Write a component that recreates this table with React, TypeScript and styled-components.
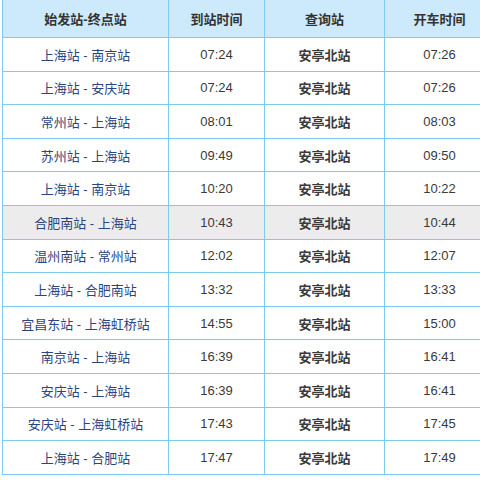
import React from 'react';
import styled, { createGlobalStyle } from 'styled-components';

const GlobalStyle = createGlobalStyle`
  html, body {
    margin: 0;
    padding: 0;
    background: #ffffff;
    overflow: hidden;
  }
  body {
    font-family: "Liberation Sans", "Noto Sans CJK SC", Arial, sans-serif;
  }
`;

type Train = {
  route: string;
  arrive: string;
  station: string;
  depart: string;
};

const trains: Train[] = [
  { route: '上海站 - 南京站', arrive: '07:24', station: '安亭北站', depart: '07:26' },
  { route: '上海站 - 安庆站', arrive: '07:24', station: '安亭北站', depart: '07:26' },
  { route: '常州站 - 上海站', arrive: '08:01', station: '安亭北站', depart: '08:03' },
  { route: '苏州站 - 上海站', arrive: '09:49', station: '安亭北站', depart: '09:50' },
  { route: '上海站 - 南京站', arrive: '10:20', station: '安亭北站', depart: '10:22' },
  { route: '合肥南站 - 上海站', arrive: '10:43', station: '安亭北站', depart: '10:44' },
  { route: '温州南站 - 常州站', arrive: '12:02', station: '安亭北站', depart: '12:07' },
  { route: '上海站 - 合肥南站', arrive: '13:32', station: '安亭北站', depart: '13:33' },
  { route: '宜昌东站 - 上海虹桥站', arrive: '14:55', station: '安亭北站', depart: '15:00' },
  { route: '南京站 - 上海站', arrive: '16:39', station: '安亭北站', depart: '16:41' },
  { route: '安庆站 - 上海站', arrive: '16:39', station: '安亭北站', depart: '16:41' },
  { route: '安庆站 - 上海虹桥站', arrive: '17:43', station: '安亭北站', depart: '17:45' },
  { route: '上海站 - 合肥站', arrive: '17:47', station: '安亭北站', depart: '17:49' },
];

// 鼠标悬停的那一行
const HOVER_ROW = 5;

const App: React.FC = () => {
  return (
    <>
      <GlobalStyle />
      <Wrapper>
        <Table>
          <colgroup>
            <col style={{ width: 166 }} />
            <col style={{ width: 96 }} />
            <col style={{ width: 120 }} />
            <col style={{ width: 110 }} />
          </colgroup>
          <thead>
            <tr>
              <HeadCell>始发站-终点站</HeadCell>
              <HeadCell>到站时间</HeadCell>
              <HeadCell>查询站</HeadCell>
              <HeadCell>开车时间</HeadCell>
            </tr>
          </thead>
          <tbody>
            {trains.map((t, i) => (
              <Row key={i} $hover={i === HOVER_ROW}>
                <Cell $kind="route">{t.route}</Cell>
                <Cell>{t.arrive}</Cell>
                <Cell $kind="station">{t.station}</Cell>
                <Cell>{t.depart}</Cell>
              </Row>
            ))}
          </tbody>
        </Table>
      </Wrapper>
    </>
  );
};

// 表格右侧超出窗口，裁掉
const Wrapper = styled.div`
  width: 478px;
  overflow: hidden;
  margin: -1px 0 0 2px;
`;

const Table = styled.table`
  border-collapse: collapse;
  table-layout: fixed;
  width: 492px;
  font-size: 13px;
`;

const HeadCell = styled.th`
  height: 37px;
  padding: 0;
  background: #cdeafc;
  border: 1px solid #7ecbef;
  color: #333333;
  font-weight: bold;
  text-align: center;
`;

const Row = styled.tr<{ $hover?: boolean }>`
  height: 33.6px;
  background: ${(p) => (p.$hover ? '#ececec' : '#ffffff')};
`;

const Cell = styled.td<{ $kind?: 'route' | 'station' }>`
  padding: 0;
  border: 1px solid #7ecbef;
  text-align: center;
  color: ${(p) => (p.$kind === 'route' ? '#2b4582' : '#3a3a3a')};
  font-weight: ${(p) => (p.$kind === 'station' ? 'bold' : 'normal')};
`;

export default App;
